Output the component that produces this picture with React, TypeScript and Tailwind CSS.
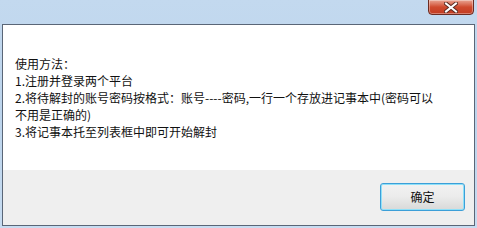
export default function App() {
  const font = { fontFamily: '"Noto Sans CJK SC", "Liberation Sans", sans-serif' };
  return (
    <div className="w-[477px] h-[228px] bg-gradient-to-b from-[#c3d9ef] via-[#bcd4ec] to-[#c7dcf1] flex flex-col overflow-hidden" style={font}>
      {/* title bar */}
      <div className="h-[24px] flex justify-end pr-[3px] shrink-0">
        <div className="w-[46px] h-[16px] -mt-px rounded-b-[4px] border border-[#6b2b22] bg-gradient-to-b from-[#e8a493] via-[#cf4a2e] to-[#c23b22] flex items-center justify-center shadow-[inset_0_0_0_1px_rgba(255,255,255,0.35)]">
          <svg width="14" height="11" viewBox="0 0 14 11">
            <path d="M2 1.5 L12 9.5 M12 1.5 L2 9.5" stroke="#5a2a22" strokeWidth="4" strokeLinecap="square" />
            <path d="M2 1.5 L12 9.5 M12 1.5 L2 9.5" stroke="#ffffff" strokeWidth="2" strokeLinecap="square" />
          </svg>
        </div>
      </div>
      {/* client area */}
      <div className="mx-[2px] mb-[2px] flex-1 border border-[#5a6677] flex flex-col">
        <div className="bg-white h-[145px] pl-[12px] pt-[30px] text-[12px] leading-[17px] text-[#111]">
          <div>使用方法：</div>
          <div>1.注册并登录两个平台</div>
          <div>2.将待解封的账号密码按格式：账号----密码,一行一个存放进记事本中(密码可以</div>
          <div>不用是正确的)</div>
          <div>3.将记事本托至列表框中即可开始解封</div>
        </div>
        <div className="flex-1 bg-[#efefef] flex justify-end pt-[13px] pr-[9px]">
          <button className="w-[85px] h-[28px] rounded-[3px] border border-[#3c9fd8] bg-gradient-to-b from-[#f2f2f2] via-[#ebebeb] to-[#d8d9d8] shadow-[inset_0_0_0_1px_#8fe0f8] text-[12px] text-[#111]">
            确定
          </button>
        </div>
      </div>
    </div>
  );
}
